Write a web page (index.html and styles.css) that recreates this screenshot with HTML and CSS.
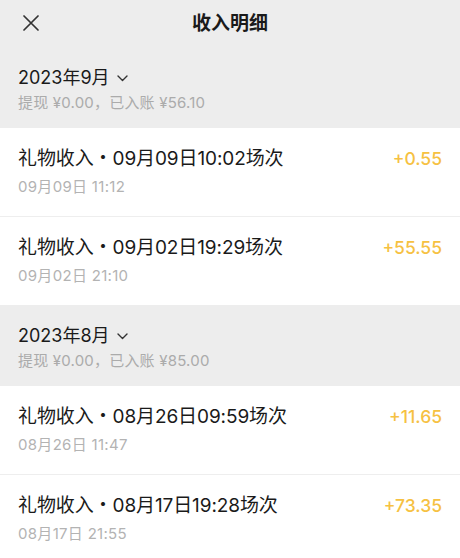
FILE: index.html
```html
<!DOCTYPE html>
<html lang="zh">
<head>
<meta charset="utf-8">
<link rel="stylesheet" href="styles.css">
</head>
<body>
<div class="page">
  <header class="nav">
    <svg class="close" width="16" height="16" viewBox="0 0 16 16"><path d="M1 1L15 15M15 1L1 15" stroke="#333" stroke-width="1.7" stroke-linecap="round" fill="none"/></svg>
    <div class="nav-title">收入明细</div>
  </header>

  <section class="month">
    <div class="month-head">
      <div class="month-title">2023年9月<svg class="chev" width="11" height="7" viewBox="0 0 11 7"><path d="M1 1L5.5 5.5L10 1" stroke="#333" stroke-width="1.4" fill="none" stroke-linecap="round" stroke-linejoin="round"/></svg></div>
      <div class="month-sub">提现 ¥0.00，已入账 ¥56.10</div>
    </div>
    <div class="row">
      <div class="row-main">
        <div class="row-title">礼物收入・09月09日10:02场次</div>
        <div class="row-date">09月09日 11:12</div>
      </div>
      <div class="amount">+0.55</div>
    </div>
    <div class="row">
      <div class="row-main">
        <div class="row-title">礼物收入・09月02日19:29场次</div>
        <div class="row-date">09月02日 21:10</div>
      </div>
      <div class="amount">+55.55</div>
    </div>
  </section>

  <section class="month">
    <div class="month-head">
      <div class="month-title">2023年8月<svg class="chev" width="11" height="7" viewBox="0 0 11 7"><path d="M1 1L5.5 5.5L10 1" stroke="#333" stroke-width="1.4" fill="none" stroke-linecap="round" stroke-linejoin="round"/></svg></div>
      <div class="month-sub">提现 ¥0.00，已入账 ¥85.00</div>
    </div>
    <div class="row">
      <div class="row-main">
        <div class="row-title">礼物收入・08月26日09:59场次</div>
        <div class="row-date">08月26日 11:47</div>
      </div>
      <div class="amount">+11.65</div>
    </div>
    <div class="row">
      <div class="row-main">
        <div class="row-title">礼物收入・08月17日19:28场次</div>
        <div class="row-date">08月17日 21:55</div>
      </div>
      <div class="amount">+73.35</div>
    </div>
  </section>
</div>
</body>
</html>
```

FILE: styles.css
```css
* { box-sizing: border-box; }
html, body { margin: 0; padding: 0; }
body {
  background: #ffffff;
  font-family: "Inter", "Noto Sans CJK SC", sans-serif;
  color: #1a1a1a;
  width: 460px;
  height: 558px;
  overflow: hidden;
}
.page { width: 460px; }
.nav {
  height: 47px;
  background: #ededed;
  display: flex;
  align-items: center;
  justify-content: center;
  position: relative;
}
.close {
  position: absolute;
  left: 23px;
  top: 15px;
}
.nav-title {
  font-size: 19px;
  font-weight: 700;
  color: #1a1a1a;
  line-height: 26px;
  padding-top: 1px;
}
.month-head {
  background: #ededed;
  height: 81px;
  padding: 18px 18px 0;
}
.month-title {
  font-size: 18px;
  line-height: 26px;
  color: #1a1a1a;
  display: flex;
  align-items: center;
}
.chev { margin-left: 7px; margin-top: 1px; }
.month-sub {
  margin-top: 2px;
  font-size: 15px;
  line-height: 20px;
  letter-spacing: 0.2px;
  color: #ababab;
}
.row {
  height: 89px;
  padding: 18px 18px 0;
  display: flex;
  justify-content: space-between;
  align-items: flex-start;
  border-bottom: 1px solid #eeeeee;
  background: #fff;
}
.row:last-child { border-bottom: none; height: 88px; }
.row-title {
  font-size: 19px;
  line-height: 26px;
  letter-spacing: -0.1px;
  color: #1a1a1a;
}
.row-date {
  margin-top: 5px;
  font-size: 15px;
  line-height: 20px;
  letter-spacing: 0.3px;
  color: #b3b3b3;
}
.amount {
  font-size: 17.5px;
  font-weight: 500;
  line-height: 26px;
  color: #f6c142;
}
```
